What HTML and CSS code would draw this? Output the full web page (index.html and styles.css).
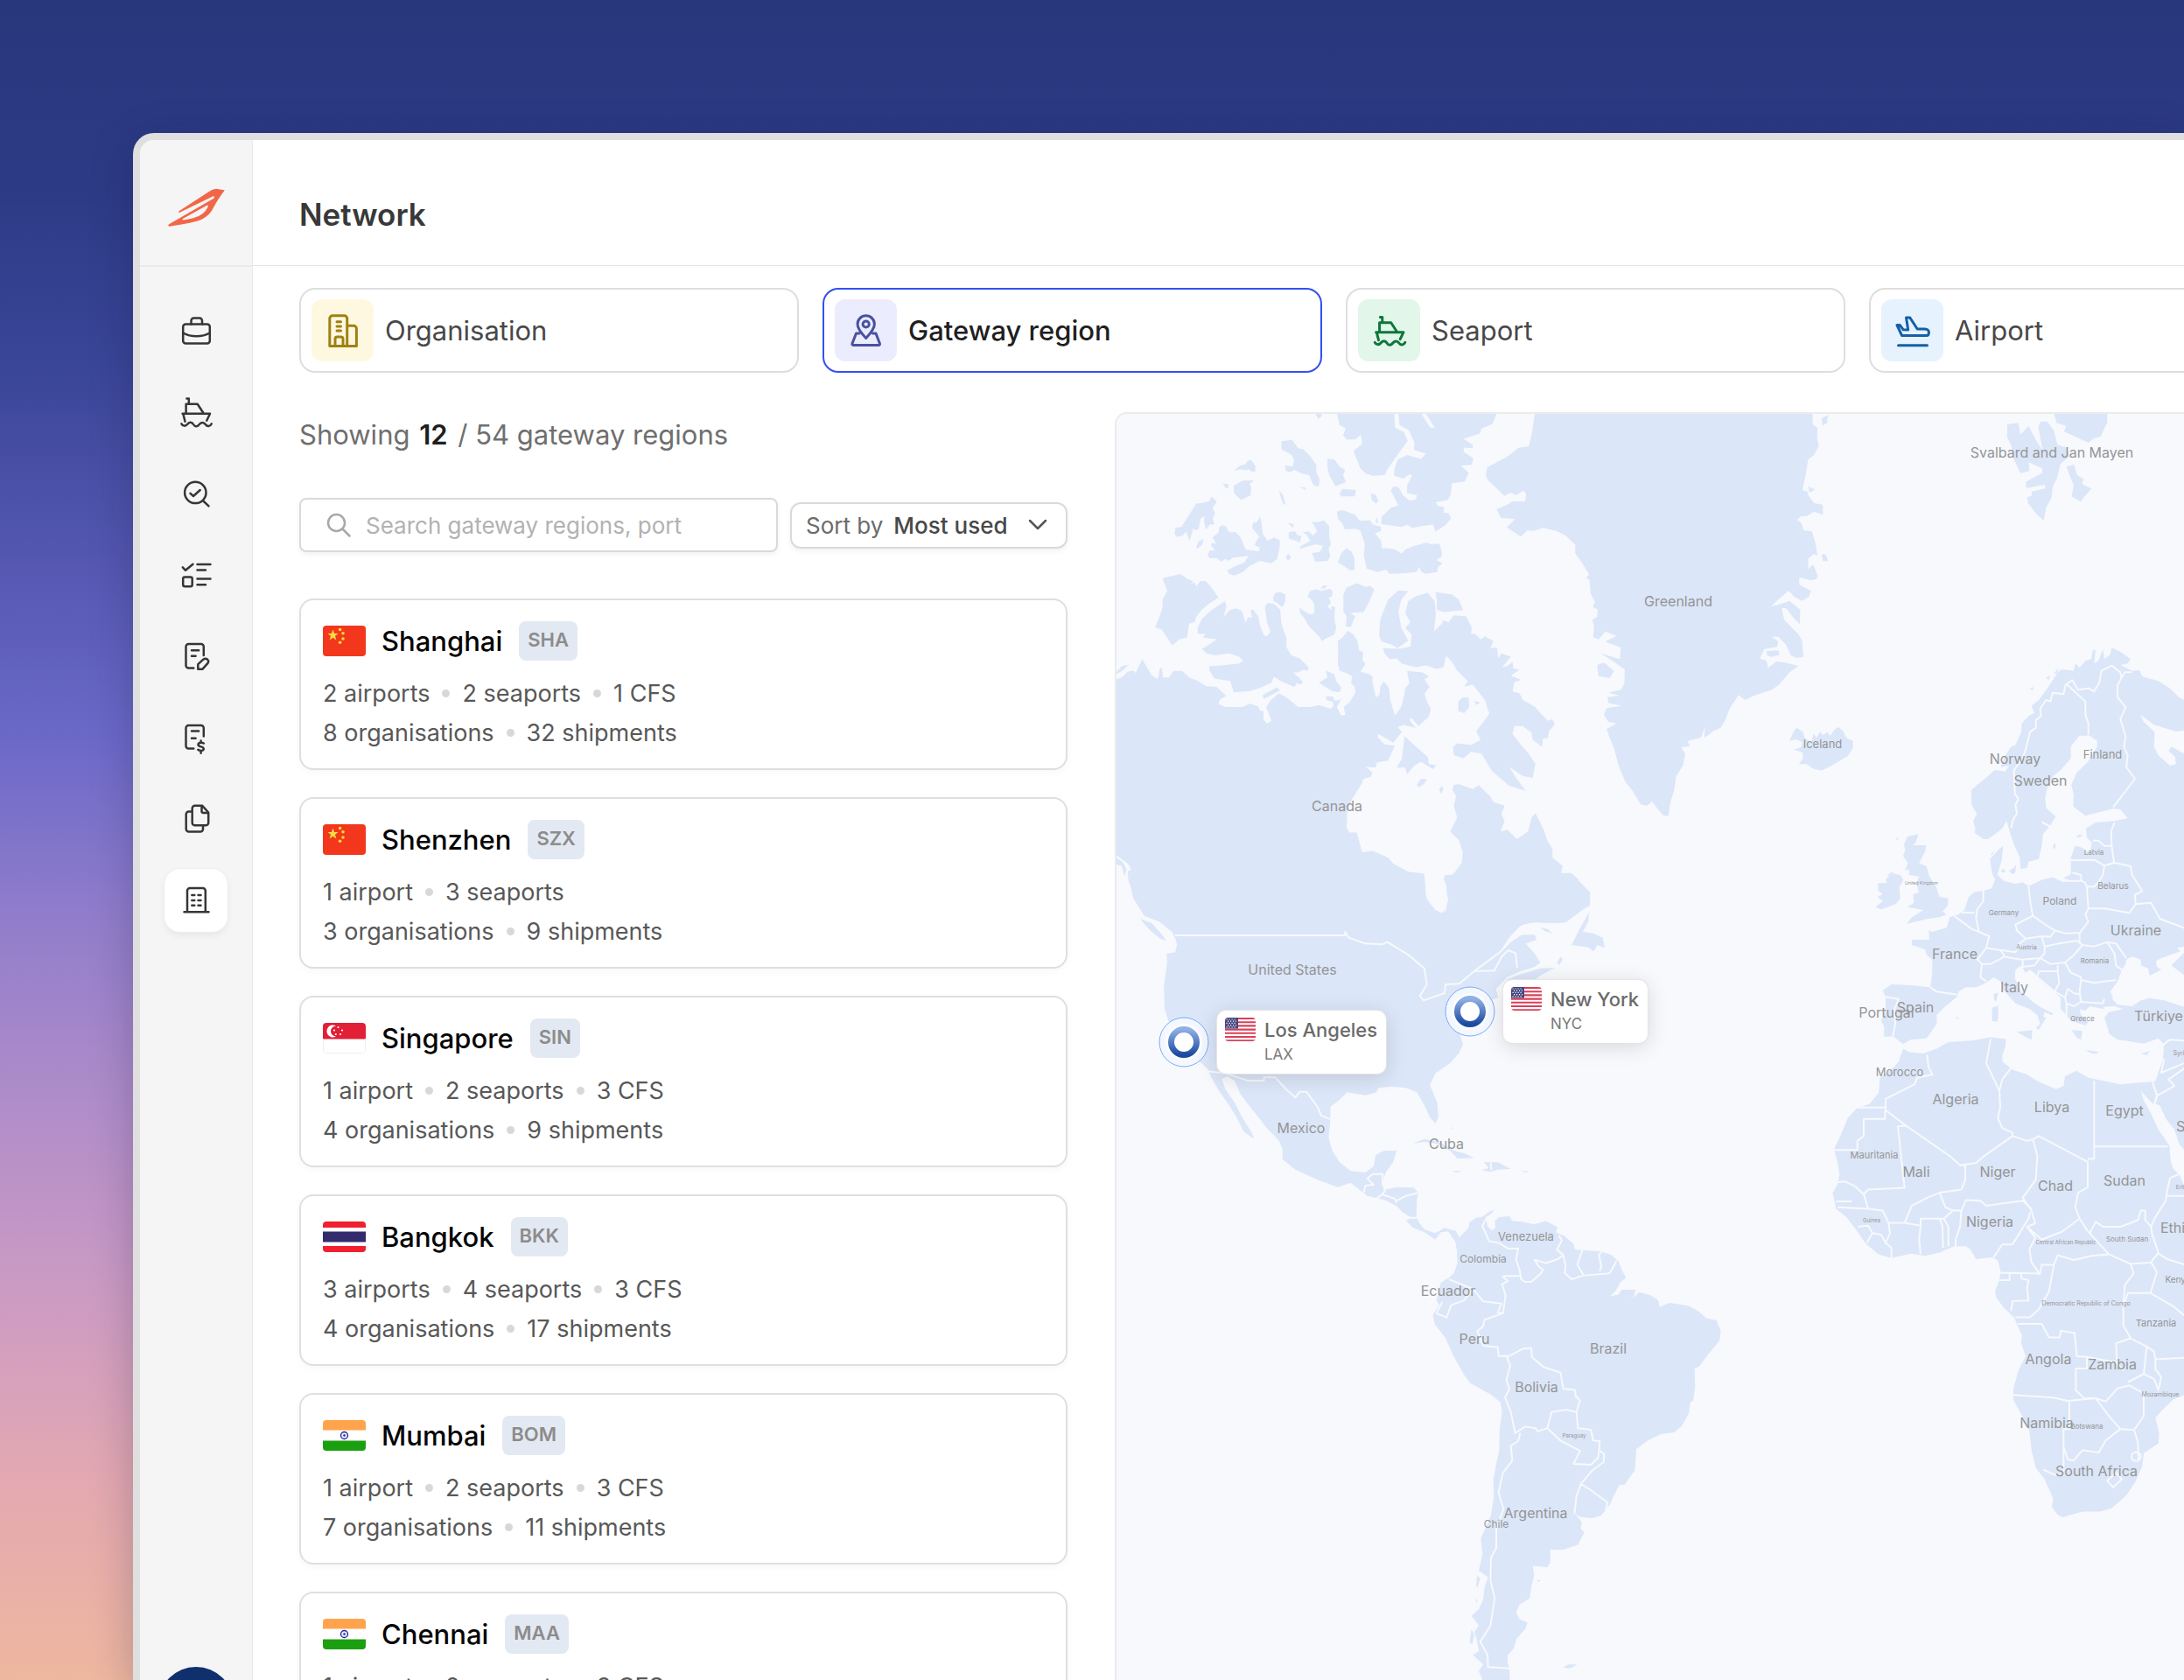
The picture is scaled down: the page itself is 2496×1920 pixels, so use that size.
FILE: index.html
```html
<!DOCTYPE html>
<html lang="en">
<head>
<meta charset="utf-8">
<meta name="viewport" content="width=device-width, initial-scale=1">
<title>Network</title>
<link rel="stylesheet" href="styles.css">
</head>
<body>
<svg class="defs" aria-hidden="true">
  <defs>
    <linearGradient id="ring" x1="0" y1="0" x2="0" y2="1"><stop offset="0" stop-color="#8fb0e4"/><stop offset="1" stop-color="#1c4aa0"/></linearGradient>
    <symbol id="ship" viewBox="0 0 40 40"><path d="M9.4 4.4h2.4v6.3M8.6 21.7v-11h13.1l7.2 11M4.6 21.7H36l-3.8 8M5.3 21.7l2.2 9"/><path d="M3.3 33.3C4.5 36 8 36.5 10 34s5-3.5 7 0 5 2.5 6.8 0 5-3 7 0 5.5 2.5 7-.7"/></symbol>
    <symbol id="flag-cn" viewBox="0 0 49 35"><path fill="#f2371d" d="M0 0h49v35H0z"/><path fill="#fcd93f" d="M11.5 4.5l1.6 4.5h4.5l-3.6 2.8 1.3 4.7-3.8-2.8-3.8 2.8 1.3-4.700L5.400 9h4.500z"/><g fill="#fcd93f"><circle cx="19.6" cy="4.5" r="1.8"/><circle cx="23" cy="8.7" r="1.8"/><circle cx="23" cy="15" r="1.8"/><circle cx="19.6" cy="19.3" r="1.8"/></g></symbol>
    <symbol id="flag-sg" viewBox="0 0 49 35"><path fill="#fff" d="M0 0h49v35H0z"/><path fill="#e11f36" d="M0 0h49v18.5H0z"/><path fill="#fff" d="M15 3.5a7 7 0 1 0 0 12 6 6 0 0 1 0-12z"/><g fill="#fff"><circle cx="17.5" cy="5" r="1.1"/><circle cx="13" cy="8.5" r="1.1"/><circle cx="22" cy="8.5" r="1.1"/><circle cx="14.8" cy="13" r="1.1"/><circle cx="20" cy="13" r="1.1"/></g><path fill="none" stroke="#eee" d="M.5 18.5v14a2 2 0 0 0 2 2h44a2 2 0 0 0 2-2v-14"/></symbol>
    <symbol id="flag-th" viewBox="0 0 49 35"><path fill="#fff" d="M0 0h49v35H0z"/><path fill="#f0202f" d="M0 0h49v7H0zM0 28h49v7H0z"/><path fill="#322b6c" d="M0 11.5h49v12H0z"/></symbol>
    <symbol id="flag-in" viewBox="0 0 49 35"><path fill="#fff" d="M0 0h49v35H0z"/><path fill="#ffa44c" d="M0 0h49v11.5H0z"/><path fill="#1b9f10" d="M0 23.5h49V35H0z"/><circle cx="24.5" cy="17.5" r="4" fill="#e8e8fb" stroke="#2424a0" stroke-width="1.3"/><circle cx="24.5" cy="17.5" r="1.2" fill="#2424a0"/></symbol>
    <symbol id="flag-us" viewBox="0 0 35 27"><path fill="#fff" d="M0 0h35v27H0z"/><path stroke="#d9405a" stroke-width="2.1" d="M0 1h35M0 5.2h35M0 9.4h35M0 13.6h35M0 17.8h35M0 22h35M0 26.2h35"/><path fill="#46467f" d="M0 0h15v12.5H0z"/><path stroke="#fff" stroke-width="1.2" stroke-dasharray="1.2 1.8" d="M1.5 2h12M3 4.2h10M1.5 6.4h12M3 8.6h10M1.5 10.8h12"/></symbol>
  </defs>
</svg>

<div class="window">
  <aside class="sidebar">
    <a class="logo" href="#" aria-label="Home">
      <svg viewBox="0 0 68 50" aria-hidden="true"><g transform="translate(-50 -75) scale(.35714 .33333)"><path fill="#f26648" fill-rule="evenodd" d="M300 230L327 235C315 253 300 275 290 297C280 318 262 335 235 342C205 350 175 355 150 359C145 358 145 354 150 351L292 263C294 260 294 255 290 256L182 312C179 311 179 309 181 307L280 238Q290 231 300 230ZM270 287L193 333C190 336 192 337 197 337C225 333 250 325 262 310Q272 297 274 290Q274 286 270 287Z"/></g></svg>
    </a>
    <nav class="nav" aria-label="Main">
      <a href="#" aria-label="Briefcase"><svg viewBox="0 0 40 40"><rect x="5.2" y="12.6" width="30.6" height="21.8" rx="3"/><path d="M14.5 12.6V8.5a3 3 0 0 1 3-3h6.5a3 3 0 0 1 3 3v4.1M5.2 22.5c9 5 21.6 5 30.6 0"/></svg></a>
      <a href="#" aria-label="Shipments"><svg viewBox="0 0 40 40"><use href="#ship"/></svg></a>
      <a href="#" aria-label="Track"><svg viewBox="0 0 40 40"><circle cx="19.3" cy="18.9" r="12.2"/><path d="M28.3 28.5l6.2 5.8M13.5 19.8l3.5 3.2 7.7-7"/></svg></a>
      <a href="#" aria-label="Tasks"><svg viewBox="0 0 40 40"><path d="M4.8 11.4L8 14.8l8.5-7M21.5 8h15M21.5 14.5h9.5M21.5 24.5h15M21.5 31.3h9.5"/><rect x="5.2" y="22.5" width="10.5" height="10.8" rx="2"/></svg></a>
      <a href="#" aria-label="Quotes"><svg viewBox="0 0 40 40"><path d="M28.8 19V9a3 3 0 0 0-3-3H11.5a3 3 0 0 0-3 3v21.5a3 3 0 0 0 3 3h5.8M15 13.3h8.2M15 19.7h4.6M22.3 34.7v-5.5l6-5.5c3.5-2.6 7.5 1 5 4.5l-5.8 6.5z"/></svg></a>
      <a href="#" aria-label="Invoices"><svg viewBox="0 0 40 40"><path d="M28.8 18.5V9a3 3 0 0 0-3-3H11.5a3 3 0 0 0-3 3v20.5a3 3 0 0 0 3 3h5.8M15 12.5h8.2M15 20.7h4.6M28.8 26.5c-2-1.5-6.3-1-6.3 1.5 0 3.2 6.3 1.6 6.3 4.8 0 2.5-4.5 2.7-6.5 1M25.6 23.5v2M25.6 35.5v2.2"/></svg></a>
      <a href="#" aria-label="Documents"><svg viewBox="0 0 40 40"><path d="M27 4.7h-8.3a3 3 0 0 0-3 3v16.5a3 3 0 0 0 3 3h12.5a3 3 0 0 0 3-3V12.500zM26.5 5v6a2 2 0 0 0 2 2h5.2M15.7 11.5h-4a3 3 0 0 0-3 3v17a3 3 0 0 0 3 3H25a3 3 0 0 0 3-3v-4"/></svg></a>
      <a href="#" aria-label="Network" aria-current="page"><svg viewBox="0 0 40 40"><path d="M6.5 33.3h28M10 33.3V9a3 3 0 0 1 3-3h14.8a3 3 0 0 1 3 3v24.3M15.3 14h3M22.5 14h3M15.3 20h3M22.5 20h3M15.3 25.8h3M22.5 25.8h3"/></svg></a>
    </nav>
    <span class="avatar"></span>
  </aside>

  <main class="main">
    <header class="header"><h1>Network</h1></header>
    <div class="tabs">
      <button class="tab" type="button"><span class="tile yellow"><svg viewBox="0 0 40 40"><path d="M4.8 37.5V6a3.2 3.2 0 0 1 3.2-3.2h13.5A3.2 3.2 0 0 1 24.7 6v31.5M24.7 14.3h7.5a3.2 3.2 0 0 1 3.2 3.2v20H4.8M11 37v-7.5a2.5 2.5 0 0 1 2.5-2.5h4a2.5 2.5 0 0 1 2.5 2.5V37M13 9.7h4.5M13 14.9h4.5M13 20.1h4.5"/></svg></span>Organisation</button>
      <button class="tab active" type="button"><span class="tile indigo"><svg viewBox="0 0 40 40"><path d="M19.7 28.5C15 23.5 10 18 10 12.5a9.7 9.7 0 0 1 19.4 0c0 5.5-5 11-9.7 16z"/><circle cx="19.7" cy="12.5" r="3.6"/><path d="M12 23H8.5L4 34.5c-.4 1.2.3 2 1.5 2h28.400c1.2 0 1.9-.8 1.5-2L31 23h-3.5"/></svg></span>Gateway region</button>
      <button class="tab" type="button"><span class="tile green"><svg viewBox="0 0 40 40"><use href="#ship"/></svg></span>Seaport</button>
      <button class="tab" type="button"><span class="tile blue"><svg viewBox="0 0 40 40"><path d="M2 13.5h3.2l4 5.3 5.5.2L12.5 5h4.3l8.4 13h8.5c3.3 0 5 2 4.7 4.5-.2 2-1 2.9-2.4 2.9H7.5zM3.5 36.7h33"/></svg></span>Airport</button>
    </div>

    <div class="content">
      <section class="list">
        <p class="summary">Showing <strong>12</strong> / 54 gateway regions</p>
        <div class="filters">
          <label class="search">
            <svg viewBox="0 0 30 30" aria-hidden="true"><circle cx="12.5" cy="12.5" r="9.5"/><path d="M19.5 19.5l8 8"/></svg>
            <input type="search" aria-label="Search gateway regions, port" placeholder="Search gateway regions, port">
          </label>
          <label class="sort">
            <span>Sort by</span>
            <select><option>Most used</option></select>
            <svg viewBox="0 0 24 24" aria-hidden="true"><path d="M3 7l9 9 9-9"/></svg>
          </label>
        </div>

        <article class="card">
          <div class="head"><svg class="flag" viewBox="0 0 49 35"><use href="#flag-cn"/></svg><h2>Shanghai</h2><span class="code">SHA</span></div>
          <ul><li>2 airports</li><li>2 seaports</li><li>1 CFS</li></ul>
          <ul><li>8 organisations</li><li>32 shipments</li></ul>
        </article>
        <article class="card">
          <div class="head"><svg class="flag" viewBox="0 0 49 35"><use href="#flag-cn"/></svg><h2>Shenzhen</h2><span class="code">SZX</span></div>
          <ul><li>1 airport</li><li>3 seaports</li></ul>
          <ul><li>3 organisations</li><li>9 shipments</li></ul>
        </article>
        <article class="card">
          <div class="head"><svg class="flag" viewBox="0 0 49 35"><use href="#flag-sg"/></svg><h2>Singapore</h2><span class="code">SIN</span></div>
          <ul><li>1 airport</li><li>2 seaports</li><li>3 CFS</li></ul>
          <ul><li>4 organisations</li><li>9 shipments</li></ul>
        </article>
        <article class="card">
          <div class="head"><svg class="flag" viewBox="0 0 49 35"><use href="#flag-th"/></svg><h2>Bangkok</h2><span class="code">BKK</span></div>
          <ul><li>3 airports</li><li>4 seaports</li><li>3 CFS</li></ul>
          <ul><li>4 organisations</li><li>17 shipments</li></ul>
        </article>
        <article class="card">
          <div class="head"><svg class="flag" viewBox="0 0 49 35"><use href="#flag-in"/></svg><h2>Mumbai</h2><span class="code">BOM</span></div>
          <ul><li>1 airport</li><li>2 seaports</li><li>3 CFS</li></ul>
          <ul><li>7 organisations</li><li>11 shipments</li></ul>
        </article>
        <article class="card">
          <div class="head"><svg class="flag" viewBox="0 0 49 35"><use href="#flag-in"/></svg><h2>Chennai</h2><span class="code">MAA</span></div>
          <ul><li>1 airport</li><li>2 seaports</li><li>3 CFS</li></ul>
          <ul><li>5 organisations</li><li>8 shipments</li></ul>
        </article>
      </section>

      <section class="map" aria-label="Map of gateway regions">
        <svg class="world" viewBox="1276 473 1220 1447">
          <g class="land">
            <g transform="translate(1270 460) scale(.3954)">
              <path d="M148 508L200 496 222 511 236 515 230 525 240 519 246 532 257 516 272 516 290 535 310 564 285 580 262 598 245 620 241 634 225 639 219 680 197 684 176 702 160 677 146 656 127 650 140 618 148 594 149 568 162 545Z"/>
              <path d="M329 574L333 590 324 620 334 610 342 600 362 595 378 603 388 637 396 620 407 623 403 601 410 598 426 620 430 645 441 672 450 676 460 662 451 638 444 592 452 580 470 582 488 598 492 640 507 685 505 705 520 730 545 740 570 765 568 776 555 772 540 780 525 780 545 797 554 808 548 815 535 812 530 822 505 812 490 805 470 792 463 810 430 825 400 834 354 838 344 805 298 798 284 775 284 762 320 760 370 754 381 747 370 735 342 725 300 731 275 725 262 712 275 705 305 684 265 680 273 668 250 668 250 650 262 625 290 600Z"/>
              <path d="M468 562L475 550 490 548 503 555 503 575 494 592 480 580 470 575ZM567 560L575 545 590 540 607 545 632 538 640 546 638 560 628 565 635 578 625 590 636 600 636 590 647 590 645 625 650 650 645 670 620 682 610 690 600 675 570 645 556 620 545 608 545 593 560 605 575 612 586 610 588 590 583 575Z"/>
              <path d="M680 535L710 522 735 533 748 530 760 540 748 570 730 606 690 608 705 618 693 648 678 648 680 618 671 604 671 555ZM655 462L665 435 680 421 695 432 703 450 703 485 690 485 672 472ZM354 240L380 226 412 225 400 235 404 245 403 268 375 282 355 262ZM354 198L372 183 388 178 395 168 405 166 417 185 416 200 405 200 398 193 388 196 375 193ZM605 538L612 530 625 528 618 537Z"/>
              <path d="M183 380L185 362 203 360 246 292 265 290 283 285 290 272 305 287 293 305 300 320 293 335 298 352 285 352 274 368 268 345 270 328 258 335 253 365 243 370 237 364 226 400 216 373 205 386 190 388ZM245 420L252 402 267 394 262 412 250 422Z"/>
              <path d="M278 440L285 428 300 428 288 412 292 405 303 410 293 390 310 375 312 360 322 355 333 360 340 375 360 375 375 392 388 425 426 430 430 420 415 413 418 402 428 388 407 362 410 348 422 345 430 330 434 345 438 380 452 400 470 390 487 398 487 415 480 452 462 465 430 458 400 472 380 490 355 500 340 495 335 485 355 475 385 462 397 443 352 448 340 458 330 452 318 460 305 450 285 450Z"/>
              <path d="M492 112L523 108 540 132 555 135 575 155 593 180 592 200 602 222 600 242 585 240 572 210 550 205 530 195 515 202 505 197 502 182 525 185 528 165 520 150 492 135ZM625 162L645 165 660 185 676 195 670 210 678 230 648 242 630 210 625 190ZM660 265L668 250 707 253 704 271 664 271Z"/>
              <path d="M652 315L670 311 705 325 718 342 748 340 755 352 780 360 780 372 762 378 780 400 782 422 800 422 820 425 840 437 850 425 875 415 910 405 925 410 948 408 955 430 955 445 940 455 957 465 945 475 942 490 910 495 897 490 890 475 882 490 850 493 805 495 795 483 770 490 738 480 730 440 733 410 720 370 705 365 675 367 668 350 655 335Z"/>
              <path d="M780 350L782 330 808 305 830 297 808 255 815 243 830 245 845 270 862 283 880 280 884 268 855 262 855 240 870 210 860 208 845 220 818 212 818 195 828 165 855 152 895 163 910 148 875 137 876 115 860 80 833 65 830 30 895 30 922 73 935 73 908 30 1115 30 1102 62 1070 75 1065 90 1018 105 1045 122 1045 132 1020 130 1018 142 1047 162 1042 180 1010 182 1033 203 1022 228 984 233 982 265 972 282 937 288 945 300 962 302 960 318 975 320 982 335 965 355 937 373 930 352 870 362 855 353 840 360 785 352Z"/>
              <path d="M652 30L818 30 820 73 845 85 857 110 825 155 800 190 790 210 755 212 735 205 720 190 700 140 725 120 722 93 705 107 680 107 670 95 678 75 660 65ZM590 30h18v10l-10 8zM750 262L765 267 772 285 765 292 753 282ZM484 255L495 265 505 297 495 290ZM322 235l14 0 3 10-6 4zM545 244l18 2-2 6zM768 330l3 20-7-6z"/>
              <path d="M578 345L600 345 615 341 630 358 630 390 635 410 628 422 633 445 625 458 590 460 580 435 603 432 612 415 590 410 545 423 548 415 575 400 565 382 553 376 570 372 583 385 595 372 585 352ZM513 375L530 372 540 385 550 385 545 405 535 400 513 393ZM510 348L528 352 525 362ZM505 445l8-8 7 12-10 8z"/>
              <path d="M14 800L30 795 48 778 65 775 70 782 90 742 100 760 118 790 135 800 140 770 146 765 150 795 168 795 180 776 205 776 225 795 250 805 275 820 305 822 332 848 315 858 310 872 330 880 380 880 400 870 425 878 430 890 440 892 440 915 450 928 463 920 448 880 460 862 485 840 510 855 540 880 575 880 600 875 635 885 643 875 640 865 622 860 620 850 640 850 645 862 660 860 668 852 652 880 665 905 677 903 672 880 690 865 706 838 703 820 693 812 697 792 680 782 660 775 655 755 656 720 655 690 668 680 683 660 700 670 712 690 716 715 728 722 726 745 735 755 720 778 745 785 755 792 755 810 765 852 775 845 778 820 788 806 803 825 806 860 820 905 838 880 848 840 850 825 862 812 855 776 900 780 918 792 905 800 920 822 905 842 915 870 924 885 918 908 888 935 868 912 862 918 880 940 845 932 828 938 840 952 815 983 772 958 770 968 790 988 820 992 800 1035 768 1040 764 1055 735 1053 755 1070 750 1082 728 1088 725 1100 700 1140 694 1150 682 1185 680 1230 690 1243 710 1243 725 1300 755 1296 800 1315 815 1333 858 1356 905 1362 908 1425 925 1460 953 1482 962 1468 970 1480 979 1445 970 1420 970 1398 960 1375 990 1362 1013 1330 1016 1300 1005 1265 980 1240 1000 1200 990 1165 997 1138 986 1120 990 1105 1005 1103 1045 1117 1062 1106 1095 1138 1105 1155 1137 1165 1128 1190 1137 1210 1125 1240 1145 1235 1172 1262 1205 1240 1215 1200 1226 1187 1250 1235 1260 1265 1275 1290 1275 1315 1305 1340 1300 1360 1330 1360 1352 1380 1305 1408 1308 1418 1360 1395 1383 1415 1383 1455 1340 1475 1310 1503 1280 1505 1205 1502 1180 1515 1160 1535 1130 1568 1000 1610 180 1610 190 1568 185 1540 160 1510 130 1490 95 1482 85 1440 65 1410 50 1385 48 1355 58 1350 48 1333 14 1308Z"/>
              <path d="M775 660L778 625 800 570 830 543 858 545 838 570 830 605 838 650 858 688 828 710 810 700 780 690 775 675Z"/>
              <path d="M785 710L835 712 865 705 868 670 850 652 865 635 850 610 858 575 880 560 915 550 935 575 938 612 933 662 955 640 960 630 975 635 990 615 1025 618 1042 650 1040 670 1050 668 1068 685 1080 676 1105 690 1095 710 1115 708 1118 740 1128 725 1155 735 1130 765 1145 762 1160 750 1162 768 1180 772 1155 790 1185 802 1165 808 1160 835 1180 840 1190 860 1225 880 1240 898 1262 920 1275 915 1282 930 1265 950 1262 970 1248 972 1245 995 1218 975 1215 955 1190 935 1165 935 1160 958 1178 982 1210 1020 1226 1045 1218 1085 1190 1080 1150 1053 1170 1085 1198 1122 1150 1108 1100 1065 1070 1015 1040 1010 1018 1028 990 1020 988 995 1000 985 1040 990 1068 975 1055 950 1093 900 1080 860 1045 815 1020 822 1030 805 1000 775 985 750 968 732 960 765 940 770 910 760 880 765 840 755 825 740 805 742 790 725Z"/>
              <path d="M937 548L985 555 1005 570 1017 600 960 606 940 598 942 575ZM848 965L870 985 915 1025 918 1045 940 1048 930 1060 895 1038 875 1050 855 1075 850 1055 825 1055 840 1030ZM1003 865L1015 852 1033 853 1035 880 1020 898 1003 892ZM883 1105L895 1088 912 1088 905 1102 890 1112ZM948 1118l8-10 4 10-6 14zM600 810L625 795 620 775 645 785 650 805 665 825 660 838 640 835ZM438 845L480 823 487 833 455 850 440 857ZM1050 862l18 6-14 6zM14 780l16-18 20-4-16 16-20 12zM14 1315l20 14 10 20-6 20-8-30-16-4z"/>
            </g>
            <g transform="translate(1700 460) scale(.50765 .33333)">
              <path d="M107 34L732 34 732 75 743 88 742 125 746 148 735 180 722 195 716 250 709 300 720 305 723 320 735 345 755 350 755 385 735 375 718 390 705 390 697 403 706 412 712 438 730 442 738 480 743 525 735 520 722 535 722 572 733 555 744 595 740 605 728 610 702 600 702 625 728 645 724 665 708 680 690 665 678 645 655 675 638 700 662 690 680 680 704 710 703 760 690 740 672 705 662 705 668 745 700 795 708 815 711 872 695 875 683 868 672 830 655 803 640 803 655 820 652 838 623 845 613 878 628 885 632 910 650 888 670 892 700 903 680 925 655 970 640 985 600 1005 580 1020 565 1003 545 1050 535 1090 525 1115 510 1125 488 1150 490 1112 480 1150 450 1160 456 1178 436 1182 445 1205 440 1245 425 1280 420 1330 412 1370 407 1418 395 1415 370 1368 360 1382 345 1378 325 1328 310 1300 295 1245 285 1185 275 1150 268 1120 290 1100 272 1095 262 1070 268 1048 302 1040 272 1030 270 1010 298 1005 272 995 300 985 308 965 309 915 290 895 255 860 298 880 300 840 265 820 290 800 265 785 250 812 238 805 240 765 236 745 247 735 248 710 237 700 242 685 232 655 230 610 222 600 229 590 215 555 197 515 198 488 175 455 155 440 125 430 105 440 90 438 75 460 43 428 62 400 30 395 20 365 45 350 55 340 85 338 87 312 80 302 65 318 52 310 38 320 0 265 -4 245 0 222 45 185 70 155 93 150 100 105Z"/>
              <path d="M247 900L262 892 285 920 275 945 250 938ZM752 55l15-12-3 28-10 8zM722 288l15 10-12 12zM752 520l10 2 5 22-12 0zM628 852L655 850 658 865 640 872 630 868Z"/>
              <path d="M1170 75L1195 70 1200 110 1218 80 1235 130 1250 165 1240 85 1245 65 1260 65 1275 95 1283 145 1305 155 1310 185 1290 210 1282 260 1272 290 1270 325 1258 360 1252 405 1235 380 1217 345 1215 325 1225 320 1225 305 1256 295 1255 282 1213 293 1212 272 1250 240 1248 225 1218 205 1220 235 1200 243 1185 195 1180 150 1170 120ZM1275 34h120v34l-15 50-15 5-12 15-55-38 5-20-22-10zM1303 220L1320 213 1328 250 1342 262 1338 280 1360 295 1345 320 1335 340 1315 322 1320 285Z"/>
            </g>
            <g transform="translate(1270 1000) scale(.42092 .33333)">
              <path d="M60 80L90 140 130 160 165 195 180 235 175 265 150 270 152 300 143 380 145 460 155 500 175 530 200 590 240 640 262 665 270 690 290 735 320 790 340 830 360 880 388 905 380 880 355 830 335 780 310 735 300 700 315 690 335 705 350 750 380 800 400 830 420 865 455 910 465 940 465 975 500 1010 560 1045 615 1070 650 1055 680 1085 695 1100 745 1115 775 1135 790 1155 815 1175 800 1185 820 1210 850 1225 880 1250 895 1225 915 1222 930 1250 947 1245 935 1220 905 1210 880 1228 850 1215 835 1190 828 1170 830 1110 835 1090 820 1072 775 1070 740 1080 735 1060 745 1020 765 985 775 945 740 945 718 960 712 1000 690 1020 650 1015 620 985 600 945 590 900 595 840 595 795 620 770 640 745 690 755 720 745 725 730 760 725 800 730 830 745 850 790 865 830 880 852 888 830 885 780 865 720 880 680 920 645 945 610 955 580 945 540 960 490 985 450 1050 420 1045 390 1075 350 1110 330 1150 315 1165 300 1150 270 1125 235 1155 222 1150 205 1115 205 1080 235 1055 265 1080 215 1110 172 1150 162 1235 162 1300 100 1300 60 1270 20 1250 0 905 0 915 85 905 135 880 120 855 80 850 0 45 0Z"/>
              <path d="M78 150L110 165 135 200 150 225 135 220 105 190ZM1075 358L1100 345 1165 320 1205 318 1165 345 1140 370 1075 372ZM1165 180l20 5 12 15-20-8zM1250 240L1270 190 1298 125 1295 160 1280 195 1310 200 1335 215 1340 250 1320 240 1310 262 1295 248ZM1210 300l10-20 6 10-10 20zM820 920L850 905 890 915 930 945 960 955 985 970 940 972 920 945 880 920 850 915ZM1012 985L1050 985 1085 1008 1050 1010 1030 1018 1005 1012 1025 1005ZM925 1015h25l-10 6zM1112 1015h20l-5 5zM923 865l6 2-2 6z"/>
            </g>
            <g transform="translate(1580 1340) scale(.33333 .3699)">
              <path d="M245 205L262 203 275 190 295 170 298 155 320 140 340 138 365 122 382 115 378 122 355 140 360 165 375 180 388 170 385 150 400 138 435 135 445 150 480 152 520 160 560 150 600 168 595 185 622 195 655 220 660 238 685 240 745 243 785 255 810 275 820 300 835 325 815 340 800 365 780 382 808 378 820 362 868 362 860 385 845 400 880 370 920 380 945 395 950 415 985 403 1050 412 1085 430 1110 450 1145 457 1160 490 1155 520 1110 570 1085 600 1070 605 1072 665 1065 705 1055 710 1050 745 1025 785 1000 803 955 808 910 828 870 855 865 920 830 965 812 965 795 995 780 1025 750 1060 720 1068 680 1065 660 1055 683 1080 680 1100 692 1112 670 1150 620 1165 575 1165 575 1205 565 1220 515 1215 520 1245 510 1280 505 1315 470 1335 458 1360 470 1380 497 1390 490 1410 460 1440 450 1470 430 1490 428 1510 435 1535 437 1572 345 1572 330 1540 345 1520 310 1490 330 1480 325 1450 315 1420 330 1400 305 1370 330 1350 345 1320 350 1280 362 1250 330 1230 343 1180 337 1130 350 1105 372 1060 382 1000 380 950 390 900 400 860 402 790 410 740 405 710 370 685 300 650 280 625 245 570 215 510 180 470 172 440 195 410 185 395 200 340 228 325 245 310 257 280 255 240 250 215ZM325 1245l10 10-10 30-4-10zM320 1315l6 8-4 8zM620 1528l18-8 30 0-20 10-12 2zM530 1258l12 2-8 6zM305 1410l10 20-8 30-8-10z"/>
            </g>
            <g transform="translate(1990 720) scale(.33333)">
              <path d="M165 380L180 348 190 335 212 350 217 370 240 385 248 355 258 370 270 348 280 360 295 350 305 362 320 342 332 332 350 348 360 370 383 380 383 405 365 432 335 450 300 470 275 482 245 475 225 460 198 460 212 440 210 420 180 410 205 402 210 385 188 375Z"/>
              <path d="M830 717L800 695 803 680 795 655 808 630 790 600 788 550 810 530 835 510 870 480 905 485 918 465 890 470 900 440 925 400 940 395 960 350 962 320 985 295 1005 285 995 260 1020 240 1035 220 1060 185 1085 145 1100 135 1140 140 1145 115 1160 130 1180 105 1200 100 1205 70 1215 68 1210 115 1225 105 1240 65 1245 100 1265 85 1270 60 1300 75 1335 100 1325 115 1300 120 1340 140 1365 138 1375 160 1430 175 1470 200 1500 230 1520 240 1520 345 1490 348 1415 325 1368 290 1380 315 1418 350 1415 400 1430 430 1470 465 1490 460 1488 435 1465 415 1475 400 1520 425 1520 1085 1495 1090 1505 1102 1440 1125 1422 1135 1425 1155 1440 1165 1400 1185 1395 1160 1370 1150 1370 1130 1340 1120 1320 1130 1318 1145 1305 1165 1290 1205 1265 1240 1275 1260 1265 1275 1240 1290 1245 1300 1195 1290 1180 1305 1160 1300 1165 1320 1190 1345 1180 1355 1130 1340 1115 1320 1095 1300 1095 1260 1065 1235 1030 1205 1005 1175 990 1165 975 1175 960 1150 940 1165 938 1195 960 1240 1000 1275 1030 1295 1070 1315 1065 1320 1040 1310 1035 1325 1045 1330 1020 1370 1010 1365 1025 1350 1015 1320 990 1300 940 1280 900 1235 890 1205 865 1190 840 1210 805 1225 770 1225 745 1240 740 1258 700 1290 670 1320 670 1350 650 1380 635 1400 580 1405 555 1420 520 1393 490 1395 490 1360 480 1340 495 1300 495 1260 485 1235 515 1215 580 1218 648 1225 655 1180 655 1130 637 1115 630 1095 585 1080 585 1062 645 1062 643 1030 655 1035 705 1020 715 985 745 975 765 960 780 915 800 898 830 895 860 885 870 855 860 835 853 785 880 755 898 740 893 790 878 840 900 860 940 870 965 865 985 878 1035 855 1068 848 1095 860 1130 862 1105 850 1130 838 1130 780 1145 740 1165 745 1195 765 1202 730 1185 710 1182 680 1215 660 1280 655 1325 645 1300 615 1275 612 1245 620 1180 637 1138 605 1140 565 1132 530 1150 490 1190 450 1220 400 1220 380 1195 362 1160 362 1130 400 1130 440 1095 480 1070 500 1050 540 1042 575 1045 610 1078 640 1060 670 1030 655 1030 662 1055 675 1035 700 1030 740 1020 785 985 795 980 815 958 820 955 780 935 735 920 690 910 655 895 680 870 700 845 717Z"/>
              <path d="M1475 1150L1520 1105V1185ZM918 825L935 815 942 805 940 830 930 838ZM890 825l10-6 5 8-8 6zM1068 740l8-10 2 12-6 12zM1148 710l12-10 10 4-12 8zM570 708L607 700 600 725 590 738 633 738 632 755 610 800 635 810 645 845 668 880 680 915 710 920 708 945 690 965 705 975 680 985 640 990 600 1000 567 1008 585 985 625 960 570 950 592 935 590 905 610 900 600 870 610 845 575 840 575 820 560 825 572 800 555 775 562 755 558 735ZM468 868L500 868 495 855 520 835 545 840 555 855 550 870 542 880 545 920 530 940 480 958 460 950 485 930 468 915 485 905 470 895ZM500 845l10-12 14-5-14 14zM530 718l10-10-5 14zM865 1248l15-5-5 30-8-4zM860 1295L880 1288 882 1320 878 1343 860 1340ZM945 1378L998 1372 995 1405 970 1393ZM1180 1440l44 6-2 6-20 0zM1370 1452l30-8-10 14zM1133 1372L1170 1375 1165 1405 1150 1398ZM735 1328h12l-5 6zM988 200l14-4-2 10zM1045 165l14-10-4 16zM1070 150l20-22-8 20zM855 770l12-14-6 16z"/>
              <path d="M1235 1270L1265 1258 1290 1285 1340 1290 1370 1270 1400 1262 1450 1270 1520 1293V1405L1470 1405 1450 1420 1430 1400 1380 1418 1330 1410 1290 1405 1262 1385 1252 1350 1245 1330 1260 1310 1310 1300 1280 1290 1240 1292ZM1520 1405L1460 1405 1448 1430 1450 1470 1440 1500 1430 1540 1428 1565H1520Z"/>
            </g>
            <g transform="translate(2070 1180) scale(.33333 .3699)">
              <path d="M315 50L335 60 385 65 430 50 470 30 550 25 615 15 668 20 665 45 655 70 655 90 690 115 740 130 775 150 840 175 865 165 870 135 910 118 950 140 1005 150 1060 160 1125 155 1170 152 1182 195 1173 222 1150 200 1130 180 1140 210 1165 250 1190 300 1210 325 1228 350 1232 395 1240 420 1262 440 1280 475 1280 1120 1240 1135 1205 1165 1180 1190 1193 1240 1190 1270 1140 1300 1135 1340 1110 1390 1080 1430 1030 1470 990 1480 930 1480 890 1490 862 1498 845 1490 825 1465 830 1440 800 1380 770 1345 755 1290 748 1230 720 1180 693 1135 693 1100 710 1045 735 1000 720 960 722 935 695 880 660 850 635 820 630 800 643 770 650 740 640 705 620 695 565 700 545 670 530 660 490 660 440 680 390 690 340 683 275 697 230 685 185 650 155 610 120 570 85 545 80 520 73 497 90 470 97 440 90 400 78 360 100 320 125 265 155 235 200 220 232 185 235 140 280 110 300 90Z"/>
              <path d="M1280 20L1215 25 1208 60 1205 85 1195 110 1180 150 1170 155 1186 195 1178 220 1195 225 1215 265 1245 300 1262 345 1280 365Z"/>
            </g>
          </g>
          <g class="borders">
            <g transform="translate(1270 1000) scale(.42092 .33333)"><path d="M173 207H635V195L645 215 690 235 735 238 750 230 808 275 850 320 857 375 838 415 848 430 905 405 908 375 945 373 985 330 1040 328 1060 280 1078 258 1098 268 1102 320M985 330L1055 265 1085 225M262 673L310 680 370 705 415 705V694H445L475 735 500 763 512 743 530 743 560 795 570 825 597 838M685 1090L690 1065 712 1062 695 1040 710 1025H737V1065M738 1060L750 1018M715 1115L735 1095 770 1110 775 1125M735 1095L745 1080M770 1120L800 1100 835 1090M800 1175H830M1030 985L1032 1012"/></g>
            <g transform="translate(1580 1340) scale(.33333 .3699)"><path d="M360 135L342 165 355 190 365 212 400 218 430 235 465 235 458 270 470 300 475 330 490 338 510 338 545 310 550 300 535 290 522 270 560 280 600 268 620 255 598 238 615 210 605 195M415 320H470M620 255L628 290 625 310 648 330 690 318 770 312 780 310 803 272M690 318L668 285 685 240M745 305L750 290 742 255 750 245M410 320L430 335 410 345 422 380 413 435 395 432 408 405 345 398 310 360 270 345 228 330M413 435L350 455 345 475 325 490 345 535 395 540 398 567 435 567 480 545 510 543 512 570 550 600 610 618 620 668 660 672 662 690 677 705 665 740 670 790 715 795 722 828 745 830 740 880 715 903 655 900 677 860 610 828 565 790 580 740 630 733 665 740M310 360L280 395 235 410 220 448 185 435 205 400M425 567L438 597 425 640 435 670 420 695 440 740 455 805 490 785 525 790 532 800 565 790M472 805L465 830 440 845 445 890 412 930 398 990 415 1040 390 1100 390 1160 372 1190 370 1260 385 1315 370 1400 335 1450 360 1490 362 1528 435 1532M745 860L760 870 758 895 720 920 680 962 665 1000 658 1055M680 962L712 980 772 1020 765 1042"/></g>
            <g transform="translate(1990 720) scale(.33333)"><path d="M925 680L932 650 945 630 940 600 950 580 938 560 935 480 965 440 975 410 990 350 1010 335 1010 310 1028 295 1025 270 1045 240 1060 245 1068 215 1105 220 1112 188 1135 172 1155 205 1190 200 1210 210 1228 180 1235 140 1270 122 1300 145 1303 165 1290 190 1290 230 1318 265 1300 305 1318 365 1312 400 1325 430 1320 470 1350 510 1275 608M1115 185L1180 245 1180 290 1190 320 1190 360M1303 165L1315 145 1340 145M1280 660L1268 690 1270 740 1278 795M1205 722L1225 722 1245 740 1270 740M1130 790L1210 788 1245 808 1280 798 1335 810 1340 840 1375 895 1350 908 1352 940 1330 970 1245 955 1190 955M1245 808L1240 840 1225 865 1210 880 1185 880 1178 865 1165 860H1098M1165 860L1165 840 1135 832M1185 880L1190 955 1180 975 1190 1000 1160 1040 1160 1070M985 878L992 940 1000 980 940 1010 945 1030 975 1058 1030 1050 1060 1052 1075 1030 1035 1005 1000 980M1075 1030L1110 1040 1160 1038M1352 940L1405 935 1435 990 1520 1022M830 895L830 930 808 960 805 990 815 1035 850 1050 840 1090 870 1095 940 1105 955 1075 975 1058M730 980L790 1025 815 1035M755 968L800 970M840 1090L810 1130 825 1145 855 1145 885 1130 900 1120 960 1130 1025 1125 1040 1110 1040 1085 1030 1050M890 1100L905 1120M825 1145L820 1190 840 1205M1040 1085L1090 1075 1150 1065 1170 1080 1140 1115 1110 1140 1060 1145 1025 1125 1005 1150 965 1155 965 1130M1170 1080L1210 1085 1255 1070 1280 1110 1285 1150 1305 1165M1255 1070L1285 1075 1320 1125M1110 1140L1130 1175 1165 1190 1165 1200 1210 1210 1285 1200M1165 1200L1160 1240 1165 1275 1240 1280 1245 1265M1085 1150L1085 1170 1020 1170 1015 1190 1075 1240 1090 1210 1085 1170M1075 1240L1110 1260 1115 1280 1140 1290 1165 1275M1110 1260L1120 1230 1140 1245 1165 1250M1115 1280L1115 1320M648 1225L670 1240 740 1250M495 1258L540 1265 525 1300 528 1350 520 1393M1448 1420L1470 1405 1520 1408M1450 1470L1440 1518 1520 1485"/></g>
            <g transform="translate(2070 1180) scale(.33333 .3699)"><path d="M397 68L402 105 415 130 362 140 355 160 255 205V240L325 288 297 290 320 480 195 485 180 500 150 475 115 460 90 463M255 232H160M253 240V267H180V320L158 335V363H78M325 288L480 385 510 410 565 403 595 380 690 320 690 310 655 295 640 265 648 230 645 180 600 95 615 20M645 180L655 145 685 110M690 320L740 335 760 330 780 320 948 400V478L915 495 905 540 920 575 860 615 790 640 740 600 768 590 755 550 725 510 770 455 775 380 760 330M970 150V390H948M970 352H1222M510 410L528 410V455L515 485 440 495 400 510 345 535 320 588 265 588M440 495L460 540 485 550 515 550 530 518 580 520 600 535 680 525 725 520 755 545M515 550L510 600 495 640V660M440 572L450 600 452 665M455 575L470 600 470 660M485 550L455 575H375L375 595 370 640 375 685M320 588L375 597M180 500L195 545 90 540M195 545L245 550 265 588 270 620 255 650 275 665V697M160 600L195 597 210 620 190 650M210 620L240 625 255 650M85 522h55M750 555L745 575 690 655 655 655 625 695M740 600L768 635 748 670 755 710 783 745 680 743 650 743M680 745V765H645M783 750L790 718H832L845 688 900 703 960 690 1020 685 995 660 945 610 920 575M720 745L720 760 745 765 740 790 745 828 690 830 685 860M832 718L815 800 780 855 750 880 700 880M708 900H790L815 942H852L855 922 903 928 910 1000 945 1002V1038H907V1105L935 1130 975 1130 1010 1140 1050 1100 1090 1090 1140 1115V1185L1107 1228 1120 1265 1122 1320M693 1120L830 1128 880 1138 975 1130 1025 1190 1060 1225 1107 1228M1060 1225L1010 1260 985 1298 930 1290 900 1322 880 1320 865 1280M885 1140V1225H865V1368L830 1365 795 1350M955 620L975 585 1000 600 1060 600 1120 580 1130 550 1145 550 1145 580 1165 600 1168 620 1190 680 1165 710 1095 715 1020 685M1165 600L1180 570 1215 520 1220 490 1230 450 1260 438M1215 505H1280M1190 683L1220 700 1280 717M1165 710L1185 740 1163 805 1085 805 1070 850 1070 905 1095 945 1150 970 1175 985 1180 1010 1280 1005M1095 715L1105 745 1075 780 1070 850M1163 805L1240 845 1280 875M1095 945L1045 960 1048 1020 1070 1045M945 1002L1048 1020M1150 970L1140 1055 1085 1080M1140 1055L1175 1070 1190 1105 1200 1065 1180 1040V1010M1098 1310a16 14 0 1 0 32 0a16 14 0 1 0-32 0M1015 1385L1045 1360 1065 1380 1035 1405ZM1170 155L1186 195 1178 220M1186 195L1245 165 1225 145 1280 110"/></g>
          </g>
          <g class="labels">
            <text class="t16" x="2345" y="523">Svalbard and Jan Mayen</text>
            <text class="t16" x="1918" y="693">Greenland</text>
            <text class="t16" x="1528" y="927">Canada</text>
            <text class="t16" x="1477" y="1114">United States</text>
            <text class="t16" x="1487" y="1295">Mexico</text>
            <text class="t16" x="1653" y="1313">Cuba</text>
            <text class="t13" x="1744" y="1418">Venezuela</text>
            <text class="t12" x="1695" y="1443">Colombia</text>
            <text class="t16" x="1655" y="1481">Ecuador</text>
            <text class="t16" x="1685" y="1536">Peru</text>
            <text class="t16" x="1838" y="1547">Brazil</text>
            <text class="t16" x="1756" y="1591">Bolivia</text>
            <text class="t6" x="1799" y="1643">Paraguay</text>
            <text class="t16" x="1755" y="1735">Argentina</text>
            <text class="t12" x="1710" y="1746">Chile</text>
            <text class="t13" x="2083" y="855">Iceland</text>
            <text class="t16" x="2303" y="873">Norway</text>
            <text class="t13" x="2403" y="867">Finland</text>
            <text class="t16" x="2332" y="898">Sweden</text>
            <text class="t8" x="2393" y="977">Latvia</text>
            <text class="t5" x="2196" y="1011">United Kingdom</text>
            <text class="t10" x="2415" y="1016">Belarus</text>
            <text class="t12" x="2354" y="1034">Poland</text>
            <text class="t8" x="2290" y="1046">Germany</text>
            <text class="t16" x="2441" y="1069">Ukraine</text>
            <text class="t7" x="2316" y="1085">Austria</text>
            <text class="t16" x="2234" y="1096">France</text>
            <text class="t8" x="2394" y="1101">Romania</text>
            <text class="t16" x="2302" y="1134">Italy</text>
            <text class="t16" x="2189" y="1157">Spain</text>
            <text class="t16" x="2156" y="1163">Portugal</text>
            <text class="t8" x="2380" y="1167">Greece</text>
            <text class="t16" x="2467" y="1167">Türkiye</text>
            <text class="t7" x="2492" y="1206">Syria</text>
            <text class="t13" x="2171" y="1230">Morocco</text>
            <text class="t16" x="2235" y="1262">Algeria</text>
            <text class="t16" x="2345" y="1271">Libya</text>
            <text class="t16" x="2428" y="1275">Egypt</text>
            <text class="t16 start" x="2487" y="1293">Saudi Arabia</text>
            <text class="t11" x="2142" y="1324">Mauritania</text>
            <text class="t16" x="2190" y="1345">Mali</text>
            <text class="t16" x="2283" y="1345">Niger</text>
            <text class="t16" x="2349" y="1361">Chad</text>
            <text class="t16" x="2428" y="1355">Sudan</text>
            <text class="t6" x="2496" y="1359">Eritrea</text>
            <text class="t6" x="2139" y="1397">Guinea</text>
            <text class="t16" x="2274" y="1402">Nigeria</text>
            <text class="t16 start" x="2469" y="1409">Ethiopia</text>
            <text class="t8" x="2431" y="1419">South Sudan</text>
            <text class="t6" x="2361" y="1422">Central African Republic</text>
            <text class="t10" x="2489" y="1466">Kenya</text>
            <text class="t7" x="2384" y="1492">Democratic Republic of Congo</text>
            <text class="t11" x="2464" y="1516">Tanzania</text>
            <text class="t16" x="2341" y="1559">Angola</text>
            <text class="t16" x="2414" y="1565">Zambia</text>
            <text class="t7" x="2469" y="1596">Mozambique</text>
            <text class="t16" x="2339" y="1632">Namibia</text>
            <text class="t8" x="2385" y="1633">Botswana</text>
            <text class="t16" x="2396" y="1687">South Africa</text>
          </g>
        </svg>
        <button class="pin pin-la" type="button">
          <svg viewBox="0 0 58 58" aria-hidden="true"><circle cx="29" cy="29" r="28" fill="#f3f7fe" stroke="#7faaf6"/><circle cx="29" cy="29" r="21" fill="#fff" opacity=".7"/><circle cx="29" cy="29" r="14.5" fill="#fff" stroke="url(#ring)" stroke-width="7"/></svg>
          <span class="bubble"><svg class="flag-small" viewBox="0 0 35 27"><use href="#flag-us"/></svg><span class="place">Los Angeles<small>LAX</small></span></span>
        </button>
        <button class="pin pin-ny" type="button">
          <svg viewBox="0 0 58 58" aria-hidden="true"><circle cx="29" cy="29" r="28" fill="#f3f7fe" stroke="#7faaf6"/><circle cx="29" cy="29" r="21" fill="#fff" opacity=".7"/><circle cx="29" cy="29" r="14.5" fill="#fff" stroke="url(#ring)" stroke-width="7"/></svg>
          <span class="bubble"><svg class="flag-small" viewBox="0 0 35 27"><use href="#flag-us"/></svg><span class="place">New York<small>NYC</small></span></span>
        </button>
      </section>
    </div>
  </main>
</div>
</body>
</html>
```

FILE: styles.css
```css
* { box-sizing: border-box; }

body {
  margin: 0;
  height: 100vh;
  overflow: hidden;
  display: flex;
  padding: 152px 0 0 152px;
  font-family: Inter, "Liberation Sans", sans-serif;
  color: #3c3c3c;
  background: linear-gradient(180deg, #28367b 0%, #2d3b87 12%, #3a4698 22%, #5658b2 34%, #6b69c8 44%, #8f7ccb 54%, #b18dc9 66%, #cc9bc3 77%, #e3a8b1 88%, #eeb79f 100%);
}

h1, h2, p, ul { margin: 0; padding: 0; }
button { font: inherit; color: inherit; cursor: pointer; }
.defs { position: absolute; width: 0; height: 0; }

.window {
  flex: 1;
  min-width: 0;
  display: flex;
  border: solid #dfdfdf;
  border-width: 8px 0 0 8px;
  border-radius: 24px 0 0 0;
  background: #fff;
  box-shadow: 0 12px 48px rgba(20, 20, 60, .25);
  overflow: hidden;
}

/* Sidebar */
.sidebar {
  flex: none;
  width: 129px;
  display: flex;
  flex-direction: column;
  align-items: center;
  background: #f5f5f5;
  border-right: 1px solid #e9e9e9;
}
.logo {
  flex: none;
  width: 100%;
  height: 145px;
  padding-top: 54px;
  border-bottom: 2px solid #e9e9e9;
  text-align: center;
}
.logo svg { width: 68px; height: 50px; }
.nav {
  flex: none;
  display: flex;
  flex-direction: column;
  gap: 21px;
  padding-top: 37px;
}
.nav a {
  width: 72px;
  height: 72px;
  display: grid;
  place-items: center;
  border-radius: 18px;
}
.nav a[aria-current] {
  background: #fff;
  box-shadow: 0 0 0 1px #ededed, 0 4px 8px rgba(0, 0, 0, .06);
}
.nav svg, .tile svg {
  width: 40px;
  height: 40px;
  fill: none;
  stroke: #363636;
  stroke-width: 2.5;
  stroke-linecap: round;
  stroke-linejoin: round;
}
.avatar {
  flex: none;
  width: 86px;
  height: 86px;
  margin-top: 840px;
  border-radius: 50%;
  background: #0f2f6d;
}

/* Header and tabs */
.main { flex: 1; min-width: 0; }
.header {
  height: 144px;
  padding: 60px 53px 0;
  border-bottom: 1px solid #e4e4e4;
}
h1 {
  font-size: 35px;
  line-height: 50px;
  font-weight: 600;
  color: #383838;
}
.tabs {
  display: flex;
  gap: 27px;
  padding: 25px 0 0 53px;
}
.tab {
  flex: 0 0 571px;
  display: flex;
  align-items: center;
  gap: 13px;
  padding: 11px 12px;
  border: 2px solid #dedede;
  border-radius: 18px;
  background: #fff;
  font-size: 31px;
  line-height: 40px;
  color: #484848;
  text-align: left;
}
.tab.active {
  border-color: #3350f0;
  color: #1f1f1f;
  font-weight: 500;
}
.tile {
  width: 71px;
  height: 71px;
  display: grid;
  place-items: center;
  border-radius: 12px;
}
.tile svg { stroke-width: 3; }
.yellow { background: #fff8e1; }
.yellow svg { stroke: #9f8112; }
.indigo { background: #ebedfe; }
.indigo svg { stroke: #4a519f; }
.green { background: #e2f6e9; }
.green svg { stroke: #0d773a; }
.blue { background: #e6f2fe; }
.blue svg { stroke: #155fa8; }

/* Content */
.content {
  display: flex;
  gap: 54px;
  padding: 45px 0 0 53px;
}
.list {
  flex: 0 0 878px;
  padding-top: 6px;
}
.summary {
  font-size: 31px;
  line-height: 40px;
  color: #6f6f6f;
}
.summary strong { font-weight: 600; color: #1f1f1f; margin: 0 3px 0 2px; }
.filters {
  display: flex;
  align-items: center;
  gap: 14px;
  margin: 52px 0 53px;
}
.search, .sort {
  display: flex;
  align-items: center;
  border: 2px solid #dadada;
  background: #fff;
  box-shadow: 0 3px 6px rgba(0, 0, 0, .05);
  font-size: 26px;
}
.search {
  flex: 1;
  min-width: 0;
  height: 62px;
  gap: 16px;
  padding: 0 28px;
  border-radius: 8px;
}
.search svg { flex: none; width: 30px; height: 30px; fill: none; stroke: #a8a8a8; stroke-width: 2.5; stroke-linecap: round; }
.search input {
  flex: 1;
  min-width: 0;
  padding: 0;
  border: 0;
  outline: 0;
  background: none;
  font: inherit;
  appearance: none;
}
.search input::placeholder { color: #b2b2b2; opacity: 1; }
.sort {
  flex: 0 0 317px;
  height: 53px;
  gap: 12px;
  padding: 0 20px 0 16px;
  border-radius: 12px;
  color: #6b6b6b;
}
.sort select {
  padding: 0;
  border: 0;
  background: none;
  font: inherit;
  font-weight: 500;
  color: #484848;
  appearance: none;
}
.sort svg { width: 24px; height: 24px; margin-left: auto; fill: none; stroke: #555; stroke-width: 2.5; stroke-linecap: round; stroke-linejoin: round; }

.card {
  padding: 24px 25px 18px;
  border: 2px solid #dfdfdf;
  border-radius: 16px;
  background: #fff;
  box-shadow: 0 3px 10px rgba(0, 0, 0, .03);
}
.card + .card { margin-top: 31px; }
.head {
  height: 45px;
  display: flex;
  align-items: center;
  margin-bottom: 15px;
}
.flag { width: 49px; height: 35px; border-radius: 4px; }
h2 {
  margin: 0 19px 0 18px;
  font-size: 31px;
  line-height: 40px;
  font-weight: 500;
  color: #050505;
}
.code {
  height: 45px;
  padding: 0 10px;
  border-radius: 8px;
  background: #e3e9f2;
  font-size: 22px;
  line-height: 43px;
  font-weight: 600;
  color: #8c8c8c;
}
.card ul {
  display: flex;
  list-style: none;
  font-size: 27px;
  line-height: 45px;
  color: #585858;
}
.card li { display: flex; align-items: center; }
.card li + li::before {
  content: "";
  width: 9px;
  height: 9px;
  margin: 0 14px;
  border-radius: 50%;
  background: #d8d8d8;
}

/* Map */
.map {
  position: relative;
  flex: 1;
  min-width: 0;
  border: solid #ebebeb;
  border-width: 2px 0 0 2px;
  border-radius: 14px 0 0 0;
  background: #f7f9fd;
  overflow: hidden;
}
.world { display: block; width: 1220px; height: 1447px; }
.land { fill: #dbe6f8; }
.borders path {
  fill: none;
  stroke: #f7f9fd;
  stroke-width: 2;
  stroke-linejoin: round;
  vector-effect: non-scaling-stroke;
}
.labels { fill: #959595; text-anchor: middle; }
.start { text-anchor: start; }
.t16 { font-size: 16px; }
.t13 { font-size: 13px; }
.t12 { font-size: 12px; }
.t11 { font-size: 11px; }
.t10 { font-size: 10px; }
.t8 { font-size: 8px; }
.t7 { font-size: 7px; }
.t6 { font-size: 6px; }
.t5 { font-size: 5px; }

.pin {
  position: absolute;
  display: flex;
  align-items: center;
  gap: 9px;
  padding: 0;
  border: 0;
  background: none;
}
.pin > svg { flex: none; width: 58px; height: 58px; }
.pin-la { left: 48px; top: 682px; }
.pin-ny { left: 375px; top: 647px; }
.bubble {
  display: flex;
  align-items: flex-start;
  gap: 10px;
  height: 72px;
  padding: 8px 10px 8px 9px;
  border-radius: 10px;
  background: #fff;
  box-shadow: 0 0 0 1px #e4e4e4, 0 4px 24px rgba(0, 0, 0, .14);
  text-align: left;
}
.flag-small { width: 35px; height: 27px; border-radius: 4px; }
.place { font-size: 22px; line-height: 28px; font-weight: 500; color: #6b6b6b; white-space: nowrap; }
.place small { display: block; font-size: 17px; font-weight: 400; color: #7a7a7a; }
```
